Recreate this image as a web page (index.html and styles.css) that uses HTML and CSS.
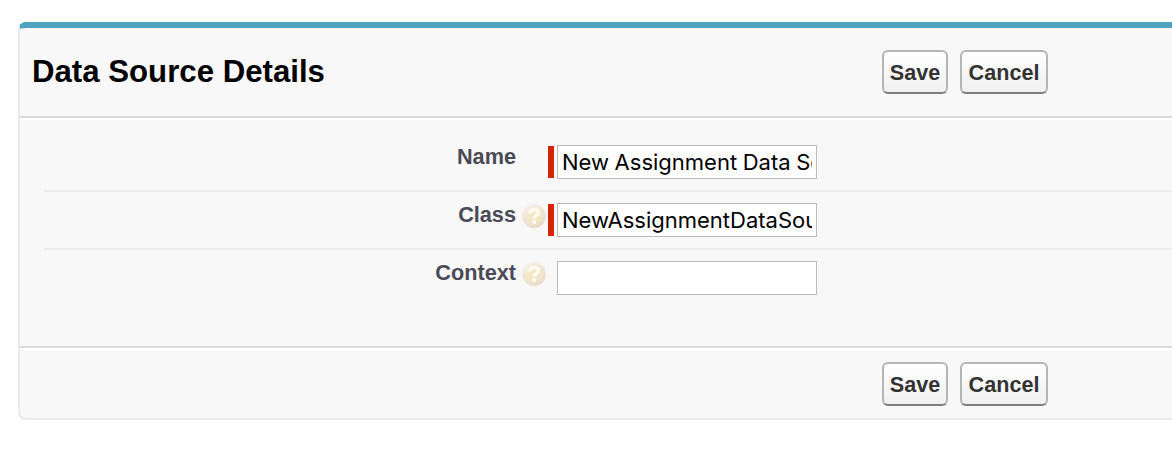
FILE: index.html
```html
<!DOCTYPE html>
<html lang="en">
<head>
<meta charset="utf-8">
<title>Data Source Details</title>
<link rel="stylesheet" href="styles.css">
</head>
<body>
<svg width="0" height="0" class="defs" aria-hidden="true">
  <defs>
    <radialGradient id="orb" cx="0.5" cy="0.5" r="0.5">
      <stop offset="0" stop-color="#efe4b4"/>
      <stop offset="0.6" stop-color="#f0e6c6"/>
      <stop offset="0.86" stop-color="#ecdfcc"/>
      <stop offset="1" stop-color="#f3ebe6"/>
    </radialGradient>
    <linearGradient id="shine" x1="0.2" y1="0" x2="0.7" y2="1">
      <stop offset="0" stop-color="#fff" stop-opacity="0.6"/>
      <stop offset="0.5" stop-color="#fff" stop-opacity="0.1"/>
      <stop offset="1" stop-color="#d9bfa4" stop-opacity="0.3"/>
    </linearGradient>
    <symbol id="help" viewBox="0 0 26 26">
      <circle cx="13" cy="13" r="12.2" fill="url(#orb)"/>
      <circle cx="13" cy="13" r="12.2" fill="url(#shine)"/>
      <path d="M9 10.2C9 5.5 17.4 5.4 17.4 9.6C17.4 12.6 13.2 12.3 13.2 15.6" fill="none" stroke="#fffdf6" stroke-width="3.2"/>
      <circle cx="13.2" cy="19" r="2" fill="#fffdf6"/>
    </symbol>
  </defs>
</svg>
<form class="panel">
  <header class="bar head">
    <h2 class="title">Data Source Details</h2>
    <div class="actions"><button type="button" class="btn save">Save</button><button type="button" class="btn cancel">Cancel</button></div>
  </header>
  <div class="fields">
    <div class="row">
      <label class="label" for="name">Name</label><span class="help"></span>
      <span class="mark required"></span><input class="input" id="name" value="New Assignment Data Source">
    </div>
    <div class="row">
      <label class="label" for="class">Class</label><svg class="help"><use href="#help"/></svg>
      <span class="mark required"></span><input class="input" id="class" value="NewAssignmentDataSource">
    </div>
    <div class="row">
      <label class="label" for="context">Context</label><svg class="help"><use href="#help"/></svg>
      <span class="mark"></span><input class="input" id="context">
    </div>
  </div>
  <footer class="bar foot">
    <div class="actions"><button type="button" class="btn save">Save</button><button type="button" class="btn cancel">Cancel</button></div>
  </footer>
</form>
</body>
</html>
```

FILE: styles.css
```css
* { box-sizing: border-box; }
body {
  margin: 0;
  padding: 22px 0 0 18px;
  height: 458px;
  overflow: hidden;
  background: #fff;
  font-family: "Liberation Sans", Arial, sans-serif;
}
.defs { display: block; height: 0; }
.panel {
  height: 398px;
  border: 2px solid #eaeaea;
  border-top: 6px solid #4fa3c1;
  border-right: 0;
  border-radius: 8px 0 0 8px;
  background: #f8f8f8;
}
.bar { display: flex; }
.head {
  height: 92px;
  padding: 22px 0 0 12px;
  border-bottom: 2px solid #fff;
  box-shadow: inset 0 -2px #dbdbdb;
}
.title {
  width: 850px;
  margin: 0;
  font-size: 31.2px;
  line-height: 44px;
  color: #000;
}
.actions { display: flex; gap: 12px; }
.btn {
  height: 44px;
  padding: 1px 0 0;
  border: 2px solid #b5b5b5;
  border-bottom-color: #7f7f7f;
  border-radius: 6px;
  background: linear-gradient(#fff, #f0f0f0);
  font: bold 21.6px "Liberation Sans", Arial, sans-serif;
  color: #333;
}
.save { width: 66px; }
.cancel { width: 88px; }
.fields { height: 226px; padding: 14px 0 0 24px; }
.row {
  display: flex;
  height: 58px;
  padding-top: 11px;
  border-bottom: 2px solid #ececec;
}
.row:last-child { border: 0; }
.label {
  width: 472px;
  font-size: 21.7px;
  font-weight: bold;
  line-height: 24px;
  text-align: right;
  color: #4a4a56;
}
.help { width: 26px; height: 26px; margin: 0 0 0 5px; }
.mark { width: 6px; height: 32px; margin: 1px 3px 0 1px; }
.required { background: #d52400; }
.input {
  width: 260px;
  height: 34px;
  padding: 0 4px;
  border: 1px solid #bababa;
  background: #fff;
  font: 22px Inter, sans-serif;
  word-spacing: -0.6px;
  color: #000;
}
.foot {
  height: 72px;
  padding: 14px 0 0 862px;
  border-top: 2px solid #dbdbdb;
  box-shadow: inset 0 2px #fff;
}
```
